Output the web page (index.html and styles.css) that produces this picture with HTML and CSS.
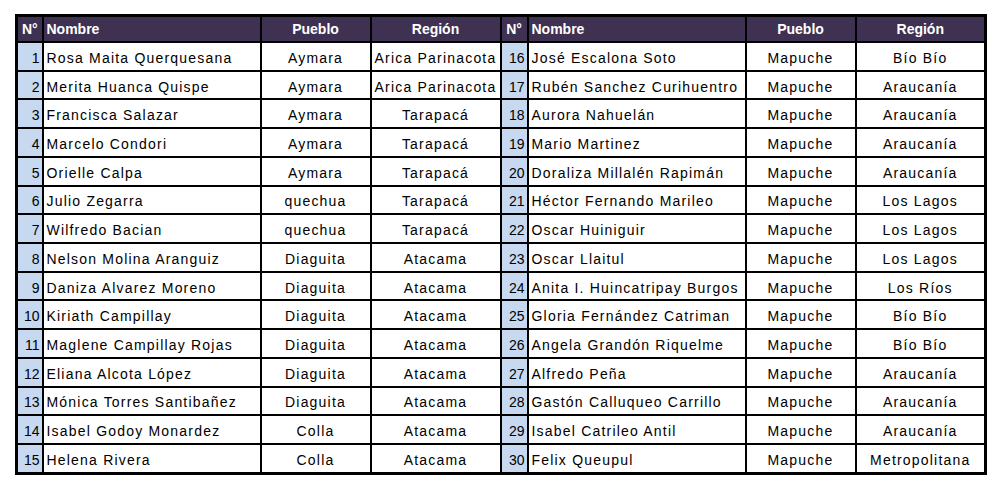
FILE: index.html
```html
<!DOCTYPE html>
<html lang="es">
<head>
<meta charset="utf-8">
<link rel="stylesheet" href="styles.css">
</head>
<body>
<div class="page">
<table class="grid">
<colgroup>
<col class="c-num"><col class="c-name"><col class="c-pueblo"><col class="c-region">
<col class="c-num2"><col class="c-name"><col class="c-pueblo"><col class="c-region">
</colgroup>
<thead>
<tr><th class="num">N°</th><th class="left">Nombre</th><th>Pueblo</th><th>Región</th><th class="num">N°</th><th class="left">Nombre</th><th>Pueblo</th><th>Región</th></tr>
</thead>
<tbody>
<tr><td class="n">1</td><td class="name">Rosa Maita Querquesana</td><td>Aymara</td><td>Arica Parinacota</td><td class="n">16</td><td class="name">José Escalona Soto</td><td>Mapuche</td><td>Bío Bío</td></tr>
<tr><td class="n">2</td><td class="name">Merita Huanca Quispe</td><td>Aymara</td><td>Arica Parinacota</td><td class="n">17</td><td class="name">Rubén Sanchez Curihuentro</td><td>Mapuche</td><td>Araucanía</td></tr>
<tr><td class="n">3</td><td class="name">Francisca Salazar</td><td>Aymara</td><td>Tarapacá</td><td class="n">18</td><td class="name">Aurora Nahuelán</td><td>Mapuche</td><td>Araucanía</td></tr>
<tr><td class="n">4</td><td class="name">Marcelo Condori</td><td>Aymara</td><td>Tarapacá</td><td class="n">19</td><td class="name">Mario Martinez</td><td>Mapuche</td><td>Araucanía</td></tr>
<tr><td class="n">5</td><td class="name">Orielle Calpa</td><td>Aymara</td><td>Tarapacá</td><td class="n">20</td><td class="name">Doraliza Millalén Rapimán</td><td>Mapuche</td><td>Araucanía</td></tr>
<tr><td class="n">6</td><td class="name">Julio Zegarra</td><td>quechua</td><td>Tarapacá</td><td class="n">21</td><td class="name">Héctor Fernando Marileo</td><td>Mapuche</td><td>Los Lagos</td></tr>
<tr><td class="n">7</td><td class="name">Wilfredo Bacian</td><td>quechua</td><td>Tarapacá</td><td class="n">22</td><td class="name">Oscar Huiniguir</td><td>Mapuche</td><td>Los Lagos</td></tr>
<tr><td class="n">8</td><td class="name">Nelson Molina Aranguiz</td><td>Diaguita</td><td>Atacama</td><td class="n">23</td><td class="name">Oscar Llaitul</td><td>Mapuche</td><td>Los Lagos</td></tr>
<tr><td class="n">9</td><td class="name">Daniza Alvarez Moreno</td><td>Diaguita</td><td>Atacama</td><td class="n">24</td><td class="name">Anita I. Huincatripay Burgos</td><td>Mapuche</td><td>Los Ríos</td></tr>
<tr><td class="n">10</td><td class="name">Kiriath Campillay</td><td>Diaguita</td><td>Atacama</td><td class="n">25</td><td class="name">Gloria Fernández Catriman</td><td>Mapuche</td><td>Bío Bío</td></tr>
<tr><td class="n">11</td><td class="name">Maglene Campillay Rojas</td><td>Diaguita</td><td>Atacama</td><td class="n">26</td><td class="name">Angela Grandón Riquelme</td><td>Mapuche</td><td>Bío Bío</td></tr>
<tr><td class="n">12</td><td class="name">Eliana Alcota López</td><td>Diaguita</td><td>Atacama</td><td class="n">27</td><td class="name">Alfredo Peña</td><td>Mapuche</td><td>Araucanía</td></tr>
<tr><td class="n">13</td><td class="name">Mónica Torres Santibañez</td><td>Diaguita</td><td>Atacama</td><td class="n">28</td><td class="name">Gastón Calluqueo Carrillo</td><td>Mapuche</td><td>Araucanía</td></tr>
<tr><td class="n">14</td><td class="name">Isabel Godoy Monardez</td><td>Colla</td><td>Atacama</td><td class="n">29</td><td class="name">Isabel Catrileo Antil</td><td>Mapuche</td><td>Araucanía</td></tr>
<tr><td class="n">15</td><td class="name">Helena Rivera</td><td>Colla</td><td>Atacama</td><td class="n">30</td><td class="name">Felix Queupul</td><td>Mapuche</td><td>Metropolitana</td></tr>
</tbody>
</table>
</div>
</body>
</html>
```
FILE: styles.css
```css
html, body {
  margin: 0;
  padding: 0;
  background: #ffffff;
}
.page {
  padding: 14px 0 0 15px;
}
.grid {
  border-collapse: collapse;
  table-layout: fixed;
  width: 971px;
  font-family: "Liberation Sans", Arial, sans-serif;
  font-size: 14px;
  color: #000;
  border: 3px solid #000;
}
.c-num { width: 26px; }
.c-num2 { width: 27px; }
.c-name { width: 218px; }
.c-pueblo { width: 110px; }
.c-region { width: 130px; }
.grid th, .grid td {
  border: 2px solid #000;
  padding: 0 3px;
  white-space: nowrap;
  overflow: hidden;
  text-align: center;
}
.grid th {
  background: #3f3151;
  color: #fff;
  font-weight: bold;
  height: 24px;
  font-size: 14px;
  letter-spacing: 0;
}
.grid th.left { text-align: left; }
.grid th.num { text-align: center; padding: 0 1px; }
.grid td {
  height: 23.73px;
  padding-top: 3px;
  letter-spacing: 1.2px;
}
.grid td.n {
  background: #c6d9f1;
  text-align: right;
  padding: 3px 2px 0 0;
  letter-spacing: 0;
}
.grid td.name { text-align: left; }
```
